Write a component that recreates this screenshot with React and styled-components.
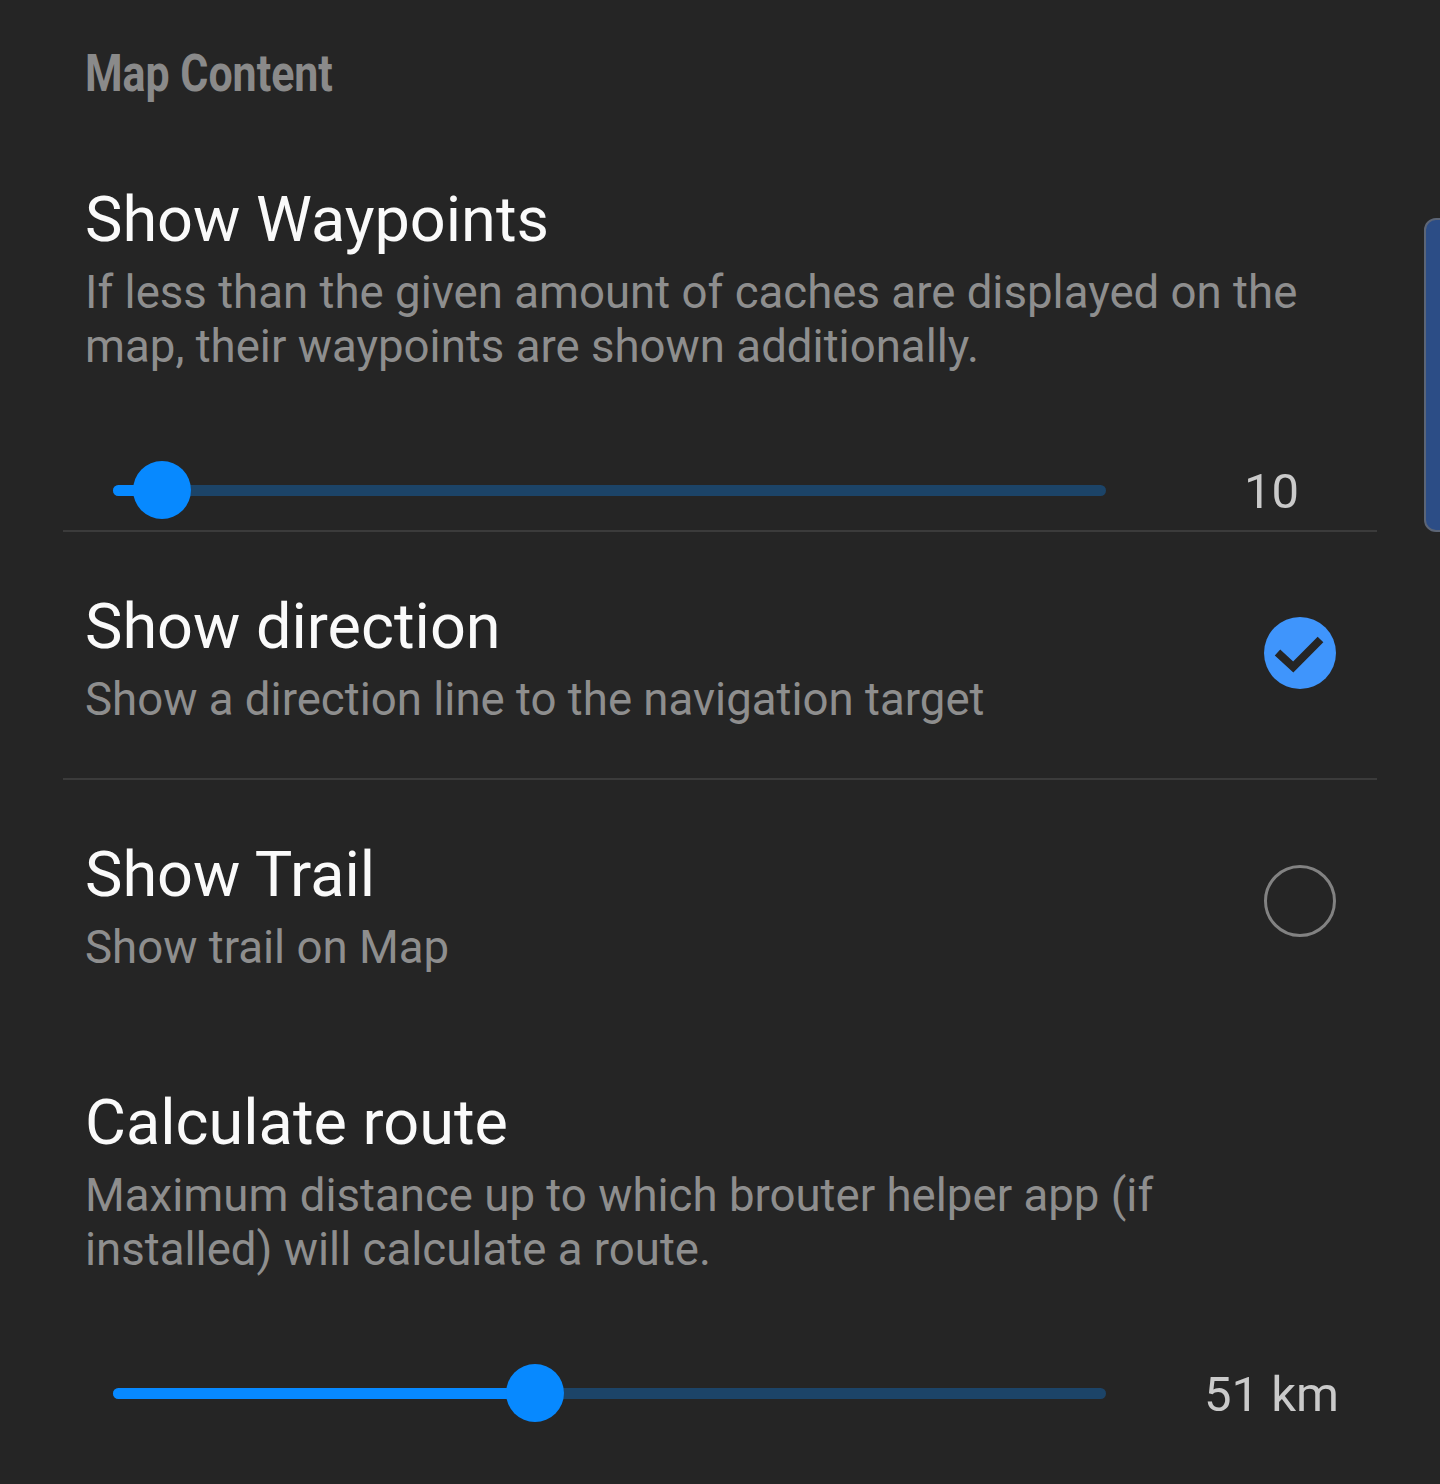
import React from "react"
import styled, { createGlobalStyle } from "styled-components"

const GlobalStyle = createGlobalStyle`
  html, body {
    margin: 0;
    padding: 0;
    background: #252525;
  }
  body {
    font-family: Roboto, "Noto Sans", "Liberation Sans", sans-serif;
    -webkit-font-smoothing: antialiased;
  }
`

const Screen = styled.div`
  position: relative;
  width: 1440px;
  min-height: 1484px;
  background: #252525;
  overflow: hidden;
`

const ScrollThumb = styled.div`
  position: absolute;
  top: 218px;
  right: -4px;
  width: 16px;
  height: 310px;
  background: #2c4d86;
  border: 2px solid #5c6576;
  border-radius: 12px 0 0 12px;
`

const CategoryBar = styled.div`
  padding: 44px 0 0 85px;
  margin-bottom: 21px;
`

const Category = styled.h2`
  margin: 0;
  font-size: 52px;
  line-height: 60px;
  font-weight: 700;
  color: #8a8a8a;
  transform: scaleX(0.825);
  transform-origin: left center;
  white-space: nowrap;
`

const List = styled.div`
  width: 1314px;
  margin-left: 63px;
`

const Item = styled.div`
  display: flex;
  flex-direction: column;
  padding: 59px 0 ${(p) => (p.$slider ? "0" : "51px")};
  border-bottom: 2px solid ${(p) => (p.$divider ? "#3b3b3b" : "transparent")};
`

const Row = styled.div`
  display: flex;
  align-items: center;
`

const Texts = styled.div`
  flex: 1;
  padding-left: 22px;
`

const Title = styled.div`
  font-size: 63px;
  line-height: 72px;
  color: #fafafa;
  white-space: nowrap;
`

const Summary = styled.div`
  margin-top: 10px;
  font-size: 45.6px;
  line-height: 54px;
  color: #8e8e8e;
  max-width: ${(p) => p.$max || 1240}px;
`

const CheckCircle = styled.svg`
  flex: none;
  width: 72px;
  height: 72px;
  margin: -12px 41px 0 0;
`

const SliderRow = styled.div`
  display: flex;
  align-items: center;
  height: 80px;
  margin-top: 76px;
  padding-left: 50px;
`

const Track = styled.div`
  position: relative;
  width: 993px;
  height: 11px;
  border-radius: 6px;
  background: #1c4468;
`

const Active = styled.div`
  height: 100%;
  border-radius: 6px;
  background: #0789ff;
`

const Thumb = styled.div`
  position: absolute;
  top: 50%;
  width: 58px;
  height: 58px;
  margin: -29px 0 0 -29px;
  border-radius: 50%;
  background: #0789ff;
`

const Value = styled.div`
  flex: 1;
  margin-left: 60px;
  text-align: center;
  font-size: 49px;
  line-height: 60px;
  padding-top: 4px;
  color: #cacaca;
`

const Check = ({ checked }) => (
  <CheckCircle viewBox="0 0 72 72">
    {checked ? (
      <>
        <circle cx="36" cy="36" r="36" fill="#3f95fc" />
        <path
          d="M13.5 35.5 L29.2 50 L56.5 22.5"
          fill="none"
          stroke="#252525"
          strokeWidth="8"
        />
      </>
    ) : (
      <circle cx="36" cy="36" r="34.5" fill="none" stroke="#828282" strokeWidth="3" />
    )}
  </CheckCircle>
)

const Slider = ({ fraction, value }) => {
  const x = 5 + fraction * 983
  return (
    <SliderRow>
      <Track>
        <Active style={{ width: x + 5 }} />
        <Thumb style={{ left: x }} />
      </Track>
      <Value>{value}</Value>
    </SliderRow>
  )
}

const App = () => {
  return (
    <>
      <GlobalStyle />
      <Screen>
        <CategoryBar>
          <Category>Map Content</Category>
        </CategoryBar>
        <List>
          <Item $slider $divider>
            <Texts>
              <Title>Show Waypoints</Title>
              <Summary>
                If less than the given amount of caches are displayed on the
                map, their waypoints are shown additionally.
              </Summary>
            </Texts>
            <Slider fraction={0.045} value="10" />
          </Item>
          <Item $divider>
            <Row>
              <Texts>
                <Title>Show direction</Title>
                <Summary>Show a direction line to the navigation target</Summary>
              </Texts>
              <Check checked />
            </Row>
          </Item>
          <Item>
            <Row>
              <Texts>
                <Title>Show Trail</Title>
                <Summary>Show trail on Map</Summary>
              </Texts>
              <Check />
            </Row>
          </Item>
          <Item $slider>
            <Texts>
              <Title>Calculate route</Title>
              <Summary $max={1100}>
                Maximum distance up to which brouter helper app (if installed)
                will calculate a route.
              </Summary>
            </Texts>
            <Slider fraction={0.424} value="51 km" />
          </Item>
        </List>
        <ScrollThumb />
      </Screen>
    </>
  )
}

export default App
